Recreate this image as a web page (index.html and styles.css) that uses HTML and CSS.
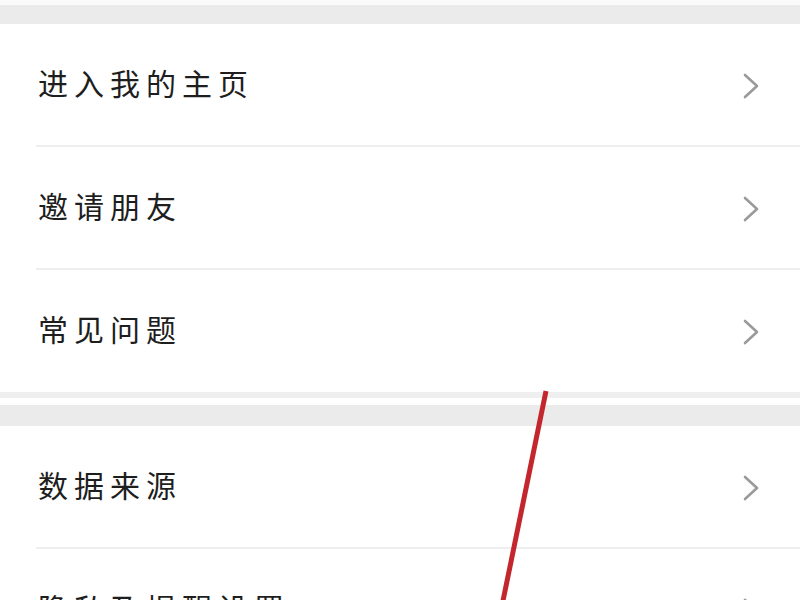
FILE: index.html
```html
<!DOCTYPE html>
<html lang="zh-CN">
<head>
<meta charset="utf-8">
<link rel="stylesheet" href="styles.css">
</head>
<body>
<div class="page">
  <div class="top-gap"></div>
  <div class="band"></div>
  <ul class="group">
    <li class="row"><span class="label">进入我的主页</span><svg class="chev" viewBox="0 0 18 28"><polyline points="3,3 15,14 3,25"/></svg></li>
    <li class="row"><span class="label">邀请朋友</span><svg class="chev" viewBox="0 0 18 28"><polyline points="3,3 15,14 3,25"/></svg></li>
    <li class="row"><span class="label">常见问题</span><svg class="chev" viewBox="0 0 18 28"><polyline points="3,3 15,14 3,25"/></svg></li>
  </ul>
  <div class="group-end"></div>
  <div class="band band-2"></div>
  <ul class="group">
    <li class="row"><span class="label">数据来源</span><svg class="chev" viewBox="0 0 18 28"><polyline points="3,3 15,14 3,25"/></svg></li>
    <li class="row"><span class="label">隐私及提醒设置</span><svg class="chev" viewBox="0 0 18 28"><polyline points="3,3 15,14 3,25"/></svg></li>
  </ul>
  <svg class="annot" viewBox="0 0 800 600"><line x1="546" y1="391" x2="497" y2="630"/></svg>
</div>
</body>
</html>
```
FILE: styles.css
```css
html, body {
  margin: 0;
  padding: 0;
  background: #ffffff;
}
.page {
  position: relative;
  width: 800px;
  height: 600px;
  overflow: hidden;
  font-family: "Noto Sans CJK SC", "Noto Sans", sans-serif;
}
.top-gap {
  height: 5px;
  background: #fafafa;
}
.band {
  height: 19px;
  background: #ebebeb;
}
.band-2 {
  height: 21px;
}
.group {
  list-style: none;
  margin: 0;
  padding: 0;
}
.row {
  height: 123px;
  display: flex;
  align-items: center;
  justify-content: space-between;
  padding: 0 40px 0 38px;
  background: #fff;
  box-sizing: border-box;
}
.row:not(:last-child) {
  background-image: linear-gradient(#eeeeee, #eeeeee);
  background-repeat: no-repeat;
  background-size: calc(100% - 36px) 2px;
  background-position: 36px 100%;
}
.label {
  font-size: 30px;
  letter-spacing: 6px;
  color: #1e1e1e;
  line-height: 1;
  margin-bottom: 7px;
}
.chev {
  width: 18px;
  height: 28px;
  flex: none;
}
.chev polyline {
  fill: none;
  stroke: #9a9a9a;
  stroke-width: 2.6;
  stroke-linecap: round;
  stroke-linejoin: round;
}
.group-end {
  height: 6px;
  margin-top: -1px;
  background: #efefef;
  border-bottom: 7px solid #fff;
}
.annot {
  position: absolute;
  left: 0;
  top: 0;
  width: 800px;
  height: 600px;
  pointer-events: none;
}
.annot line {
  stroke: #c4262e;
  stroke-width: 5;
}
```
